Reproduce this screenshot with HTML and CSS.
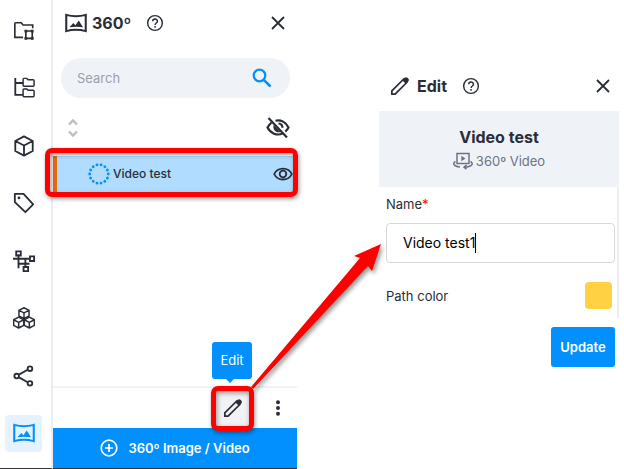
FILE: index.html
```
<!DOCTYPE html>
<html lang="en">
<head>
	<meta charset="utf-8">
	<title>360º - Video test</title>
	<meta name="viewport" content="width=device-width, initial-scale=1">
	<link rel="stylesheet" href="styles.css">
</head>
<body>
	<!-- shared icons -->
	<svg class="defs" aria-hidden="true">
		<symbol id="pano" viewBox="0 0 24 24">
			<path d="M3 4.500c6 1.600 12 1.600 18 0v15c-6-1.600-12-1.600-18 0z" fill="none" stroke="currentColor" stroke-width="1.900"/>
			<path d="M6 16l3.500-4 2 2 3-4.200L18.500 16c-4-.7-8.500-.7-12.500 0z" fill="currentColor"/>
		</symbol>
		<symbol id="help" viewBox="0 0 24 24">
			<g fill="none" stroke="currentColor" stroke-width="1.900">
				<circle cx="12" cy="12" r="9.800"/>
				<path d="M8.900 9.800c0-4 6.400-4 6.400-.2 0 2.400-3.200 2.400-3.200 5"/>
				<path d="M12.100 16v2.200"/>
			</g>
		</symbol>
		<symbol id="close" viewBox="0 0 24 24">
			<path d="M4 4l16 16M20 4L4 20" fill="none" stroke="currentColor" stroke-width="2.400"/>
		</symbol>
		<symbol id="pencil" viewBox="0 0 24 24">
			<path d="M2.200 21.800v-3.900L16.500 3.600l3.900 3.900L6.100 21.800z" fill="none" stroke="currentColor" stroke-width="2.100" stroke-linejoin="round"/>
			<path d="M14.700 5l2.800-2.900c1-1 2.400-1 3.400 0l1 1c1 1 1 2.400 0 3.400L19 9.300z" fill="currentColor"/>
		</symbol>
	</svg>

	<div class="app">
		<nav class="rail" aria-label="Tools">
			<button class="rail-button" aria-label="Folders">
				<svg viewBox="0 0 24 24" fill="none" stroke="currentColor" stroke-width="1.800">
					<path d="M11 19H2V4q0-1 1-1h6l2 2.500h10.500V9"/>
					<path d="M14 12h7v8h-7z"/>
					<path d="M12.500 12h3M19.500 12h3M12.500 20h3M19.500 20h3" stroke-width="3"/>
				</svg>
			</button>
			<button class="rail-button" aria-label="Tree">
				<svg viewBox="0 0 24 24" fill="none" stroke="currentColor" stroke-width="1.600">
					<path d="M2.500 1v18.500H11M2.500 6.500H11" stroke-width="2"/>
					<path d="M11 2.500q0-1 1-1h3l1.500 1.500H22q1 0 1 1V9q0 1-1 1H12q-1 0-1-1zM11 14q0-1 1-1h3l1.500 1.500H22q1 0 1 1v5q0 1-1 1H12q-1 0-1-1z"/>
				</svg>
			</button>
			<button class="rail-button" aria-label="Objects">
				<svg viewBox="0 0 24 24" fill="none" stroke="currentColor" stroke-width="2" stroke-linejoin="round">
					<path d="M12 1.500l9.500 5v11l-9.500 5-9.500-5v-11zM2.500 6.500l9.500 5 9.500-5M12 11.500v11"/>
				</svg>
			</button>
			<button class="rail-button" aria-label="Tags">
				<svg viewBox="0 0 24 24" fill="none" stroke="currentColor" stroke-width="2" stroke-linejoin="round">
					<path d="M2 2h9.500L22 13.500 13.500 22 2 11z"/>
					<circle cx="6.500" cy="6.500" r="1.500" fill="currentColor" stroke="none"/>
				</svg>
			</button>
			<button class="rail-button" aria-label="Network">
				<svg viewBox="0 0 24 24" fill="none" stroke="currentColor" stroke-width="2">
					<path d="M0 9.500h18M6 5v15M6 15h12M13.500 9.500v9"/>
					<path d="M3.500 1.500h5v4.500h-5zM18.500 7h4.500v5h-4.500zM11.500 18.500h5v4.500h-5z"/>
				</svg>
			</button>
			<button class="rail-button" aria-label="Groups">
				<svg viewBox="0 0 24 24" fill="none" stroke="currentColor" stroke-width="1.600" stroke-linejoin="round">
					<path id="cube" d="M12 .8l5.500 2.800v6.200L12 12.600 6.500 9.800V3.600zM6.500 3.600L12 6.400l5.500-2.800M12 6.400v6.200"/>
					<use href="#cube" x="-5.800" y="10.300"/>
					<use href="#cube" x="5.800" y="10.300"/>
				</svg>
			</button>
			<button class="rail-button" aria-label="Share">
				<svg viewBox="0 0 24 24" fill="none" stroke="currentColor" stroke-width="2">
					<path d="M6.500 10.500L16 5.200M6.500 13.500L16 18.800"/>
					<circle cx="4" cy="12" r="2.500"/>
					<circle cx="18.500" cy="4" r="2.500"/>
					<circle cx="18.500" cy="20" r="2.500"/>
				</svg>
			</button>
			<button class="rail-button active" aria-label="360º">
				<svg><use href="#pano"/></svg>
			</button>
		</nav>

		<section class="panel">
			<header class="panel-header">
				<svg class="icon-large"><use href="#pano"/></svg>
				<h1 class="heading">360º</h1>
				<button class="icon-button help" aria-label="Help"><svg><use href="#help"/></svg></button>
				<button class="icon-button close" aria-label="Close"><svg><use href="#close"/></svg></button>
			</header>

			<div class="search">
				<input class="search-input" type="text" placeholder="Search" aria-label="Search">
				<button class="icon-button search-button" aria-label="Run search">
					<svg viewBox="0 0 20 20" fill="none" stroke="currentColor" stroke-width="2.200">
						<circle cx="7.500" cy="7.500" r="5.800"/>
						<path d="M11.800 11.800L18.500 18.500" stroke-width="2.600"/>
					</svg>
				</button>
			</div>

			<div class="list-tools">
				<button class="icon-button sort" aria-label="Sort">
					<svg viewBox="0 0 20 20" fill="none" stroke="currentColor" stroke-width="2.400">
						<path d="M6 6.500l4-4 4 4M6 13.500l4 4 4-4"/>
					</svg>
				</button>
				<button class="icon-button hide-all" aria-label="Hide all">
					<svg viewBox="0 0 24 24" fill="none" stroke="currentColor" stroke-width="2.200">
						<path d="M5.500 6.500C3.800 8 2.500 9.600 1.500 11.500c3 6 9.500 8.500 15 6M9.500 4.700c5.500-1.200 10.500 1.500 13 6.800-.8 1.600-1.900 3-3.200 4.100"/>
						<path d="M12.500 7.500c2.500.2 4 1.900 4 4.300"/>
						<path d="M7.500 9l7 7c-4 1.500-8-2-7-7z" fill="currentColor" stroke="none"/>
						<path d="M2.500 2L21 21.500"/>
					</svg>
				</button>
			</div>

			<div class="row">
				<svg class="loader" viewBox="0 0 22 22">
					<circle cx="11" cy="11" r="9.300" pathLength="140" fill="none" stroke="currentColor" stroke-width="2.800" stroke-linecap="round" stroke-dasharray="0.1 9.900"/>
				</svg>
				<span class="row-name">Video test</span>
				<button class="icon-button eye" aria-label="Hide">
					<svg viewBox="0 0 20 20" fill="none" stroke="currentColor" stroke-width="1.800">
						<path d="M1.200 10C4.500 2.700 15.500 2.700 18.800 10 15.500 17.300 4.500 17.300 1.200 10z"/>
						<circle cx="10" cy="10" r="3.300"/>
					</svg>
				</button>
			</div>

			<footer class="panel-footer">
				<div class="toolbar">
					<button class="edit-button" aria-label="Edit">
						<svg><use href="#pencil"/></svg>
						<span class="tooltip">Edit</span>
					</button>
					<button class="icon-button more" aria-label="More">
						<svg viewBox="0 0 20 20" fill="currentColor">
							<circle cx="10" cy="3.500" r="2.200"/><circle cx="10" cy="10" r="2.200"/><circle cx="10" cy="16.500" r="2.200"/>
						</svg>
					</button>
				</div>
				<button class="add-button">
					<svg viewBox="0 0 18 18" fill="none" stroke="currentColor" stroke-width="1.700">
						<circle cx="9" cy="9" r="7.800"/><path d="M9 5v8M5 9h8"/>
					</svg>
					360º Image / Video
				</button>
			</footer>
		</section>

		<div class="gap">
			<svg class="arrow" viewBox="0 0 131 145" preserveAspectRatio="none" aria-hidden="true">
				<path d="M0 143L109 14 103 12 130 0 121 27 117 22 2 145z" fill="#f00"/>
			</svg>
		</div>

		<form class="edit">
			<header class="panel-header edit-header">
				<svg class="icon-medium"><use href="#pencil"/></svg>
				<h2 class="heading">Edit</h2>
				<button type="button" class="icon-button help" aria-label="Help"><svg><use href="#help"/></svg></button>
				<button type="button" class="icon-button close" aria-label="Close"><svg><use href="#close"/></svg></button>
			</header>

			<div class="summary">
				<h3 class="heading">Video test</h3>
				<p class="kind">
					<svg viewBox="0 0 20 20" fill="none" stroke="currentColor" stroke-width="1.500">
						<path d="M4 2.500h12v10H4z"/>
						<path d="M8.300 4.800l4.200 2.700-4.200 2.700z" fill="currentColor" stroke="none"/>
						<path d="M2.500 10.500C-1 12.500 1 15.500 7 16M17.500 10.500c3.500 2 1.500 5.300-6 5.600M13.500 14l-2.500 2.200 2.500 2"/>
					</svg>
					360º Video
				</p>
			</div>

			<div class="fields">
				<label class="label" for="name">Name<span class="required">*</span></label>
				<div class="text-field">
					<input id="name" class="name-input" type="text" value="Video test1">
					<span class="caret"></span>
				</div>
				<div class="color-field">
					<label class="label" for="color">Path color</label>
					<input id="color" class="color-input" type="color" value="#ffd143">
				</div>
			</div>

			<button type="button" class="update-button">Update</button>
		</form>
	</div>
</body>
</html>
```

FILE: styles.css
```
* {
	box-sizing: border-box;
}

body {
	margin: 0;
	background: #fff;
	color: #2a2d38;
	font-family: "Inter", "Open Sans", sans-serif;
	font-size: 13px;
	line-height: 20px;
}

button, input {
	margin: 0;
	padding: 0;
	border: 0;
	background: none;
	color: inherit;
	font: inherit;
	outline: none;
}

svg {
	display: block;
	flex: none;
}

.defs {
	position: absolute;
	width: 0;
	height: 0;
}

.app {
	display: grid;
	grid-template-columns: 53px minmax(0, 244fr) minmax(0, 82fr) minmax(0, 240fr) minmax(0, 5fr);
	min-height: 100vh;
}

/* Left icon rail */
.rail {
	display: flex;
	flex-direction: column;
	justify-content: space-between;
	align-items: flex-start;
	padding: 12px 5px 16px;
	border-right: 2px solid #ececf2;
	border-bottom: 1px solid #333;
}

.rail-button {
	display: grid;
	place-items: center;
	width: 37px;
	height: 37px;
	border-radius: 4px;
}

.rail-button svg {
	width: 22px;
	height: 22px;
}

.rail-button.active {
	background: #e4f3ff;
	color: #0190fe;
}

.rail-button.active svg {
	width: 26px;
	height: 26px;
}

/* Item list */
.panel {
	display: flex;
	flex-direction: column;
	border-bottom: 1px solid #333;
}

.panel-header {
	display: flex;
	align-items: center;
	height: 46px;
	padding: 0 10px;
}

.heading {
	margin: 0;
	font-size: 16px;
	font-weight: 700;
	line-height: 24px;
}

.icon-large {
	width: 26px;
	height: 26px;
	margin-right: 3px;
}

.icon-medium {
	width: 20px;
	height: 20px;
	margin-right: 7px;
}

.icon-button svg {
	width: 18px;
	height: 18px;
}

.help {
	margin-left: 15px;
}

.close {
	margin-left: auto;
}

.search {
	display: flex;
	align-items: center;
	height: 40px;
	margin: 12px 7px 0 8px;
	padding: 0 18px 0 16px;
	border-radius: 20px;
	background: #eff3f8;
}

.search-input {
	flex: 1;
	min-width: 0;
}

.search-input::placeholder {
	color: #9a9fab;
	opacity: 1;
}

.search-button {
	color: #0190fe;
}

.search-button svg {
	width: 20px;
	height: 20px;
}

.list-tools {
	display: flex;
	align-items: center;
	justify-content: space-between;
	height: 58px;
	padding: 2px 7px 0 10px;
}

.sort {
	color: #b9bdc8;
}

.sort svg {
	width: 20px;
	height: 20px;
}

.hide-all svg {
	width: 24px;
	height: 24px;
}

.row {
	position: relative;
	display: flex;
	align-items: center;
	gap: 3px;
	height: 36px;
	padding: 0 4px 0 31px;
	border-left: 4px solid #e56a10;
	background: #b0dcff;
}

/* Red marker around the selected row */
.row::after {
	content: "";
	position: absolute;
	inset: -8px -1px -5px -12px;
	border: 5px solid #f00;
	border-radius: 7px;
	box-shadow: 1px 2px 4px rgba(0, 0, 0, 0.4), inset 1px 2px 4px rgba(0, 0, 0, 0.4);
	pointer-events: none;
}

.loader {
	width: 22px;
	height: 22px;
	color: #0190fe;
}

.row-name {
	flex: 1;
	font-size: 12px;
	font-weight: 500;
}

.eye svg {
	width: 20px;
	height: 20px;
}

.panel-footer {
	margin-top: auto;
}

.toolbar {
	display: flex;
	align-items: center;
	justify-content: flex-end;
	gap: 15px;
	height: 42px;
	padding-right: 10px;
	border-top: 2px solid #eff3f8;
}

.edit-button {
	position: relative;
	display: grid;
	place-items: center;
	width: 43px;
	height: 45px;
	border: 5px solid #f00;
	border-radius: 7px;
	background: #f2f2f4;
	box-shadow: 1px 2px 4px rgba(0, 0, 0, 0.4), inset 1px 2px 5px rgba(0, 0, 0, 0.4);
}

.edit-button svg {
	width: 20px;
	height: 20px;
}

.tooltip {
	position: absolute;
	bottom: 47px;
	left: -4px;
	width: 40px;
	border-radius: 3px;
	background: #0190fe;
	color: #fff;
	line-height: 37px;
}

.tooltip::after {
	content: "";
	position: absolute;
	top: 100%;
	left: 14px;
	border: 4px solid transparent;
	border-top-color: #0190fe;
	border-bottom: 0;
}

.add-button {
	display: flex;
	align-items: center;
	justify-content: center;
	gap: 10px;
	width: 100%;
	height: 40px;
	background: #0190fe;
	color: #fff;
	font-weight: 600;
}

.add-button svg {
	width: 18px;
	height: 18px;
}

.gap {
	position: relative;
}

.arrow {
	position: absolute;
	top: 244px;
	left: -46px;
	width: calc(100% + 49px);
	height: 145px;
	overflow: visible;
	filter: drop-shadow(2px 3px 2px rgba(0, 0, 0, 0.4));
	pointer-events: none;
}

/* Edit form */
.edit {
	display: flex;
	flex-direction: column;
	padding-top: 61px;
}

.edit-header {
	height: 50px;
	padding: 0 7px 0 11px;
}

.summary {
	padding: 14px 0 16px;
	background: #eff3f8;
	text-align: center;
}

.kind {
	display: flex;
	align-items: center;
	justify-content: center;
	gap: 3px;
	margin: 2px 0 0;
	color: #6b7385;
}

.kind svg {
	width: 20px;
	height: 20px;
}

.fields {
	padding: 7px 2px 9px 7px;
	border-right: 2px solid #eee;
}

.required {
	color: #f00;
}

.text-field {
	display: flex;
	align-items: center;
	height: 40px;
	margin-top: 9px;
	padding: 0 16px;
	border: 1px solid #d5d7da;
	border-radius: 4px;
	color: #000;
	font-size: 14px;
}

.name-input {
	field-sizing: content;
}

.caret {
	width: 1px;
	height: 20px;
	background: #000;
}

.color-field {
	display: flex;
	align-items: center;
	justify-content: space-between;
	margin-top: 19px;
	padding-right: 3px;
}

.color-input {
	width: 27px;
	height: 27px;
}

.color-input::-webkit-color-swatch-wrapper {
	padding: 0;
}

.color-input::-webkit-color-swatch {
	border: 0;
	border-radius: 4px;
}

.update-button {
	align-self: flex-end;
	min-width: 64px;
	height: 40px;
	margin: 9px 4px 0 0;
	border-radius: 3px;
	background: #0190fe;
	color: #fff;
	font-weight: 600;
}
```
